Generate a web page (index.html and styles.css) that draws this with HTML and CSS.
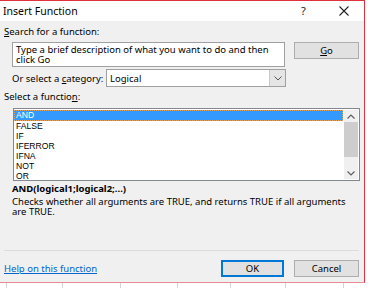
FILE: index.html
```html
<!DOCTYPE html>
<html>
<head>
<meta charset="utf-8">
<link rel="stylesheet" href="styles.css">
</head>
<body>
<div class="dialog">
  <div class="titlebar">
    <span class="title">Insert Function</span>
    <span class="help-q">?</span>
    <svg class="close" width="10" height="10" viewBox="0 0 10 10"><path d="M0.5 0.5 L9.5 9.5 M9.5 0.5 L0.5 9.5" stroke="#222" stroke-width="1.1" fill="none"/></svg>
  </div>
  <div class="body">
    <div class="label"><u>S</u>earch for a function:</div>
    <div class="search-row">
      <div class="search-box">Type a brief description of what you want to do and then click Go</div>
      <div class="btn go"><u>G</u>o</div>
    </div>
    <div class="cat-row">
      <span class="cat-label">Or select a <u>c</u>ategory:</span>
      <div class="select">
        <span class="select-val">Logical</span>
        <span class="select-arrow"><svg width="8" height="5" viewBox="0 0 8 5"><path d="M0.5 0.5 L4 4 L7.5 0.5" stroke="#555" stroke-width="1" fill="none"/></svg></span>
      </div>
    </div>
    <div class="label fn-label">Select a functio<u>n</u>:</div>
    <div class="listbox">
      <div class="items">
        <div class="item sel">AND</div>
        <div class="item">FALSE</div>
        <div class="item">IF</div>
        <div class="item">IFERROR</div>
        <div class="item">IFNA</div>
        <div class="item">NOT</div>
        <div class="item">OR</div>
      </div>
      <div class="scrollbar">
        <span class="arr"><svg width="8" height="5" viewBox="0 0 8 5"><path d="M0.5 4.5 L4 1 L7.5 4.5" stroke="#606060" stroke-width="1.2" fill="none"/></svg></span>
        <span class="track"><span class="thumb"></span></span>
        <span class="arr"><svg width="8" height="5" viewBox="0 0 8 5"><path d="M0.5 0.5 L4 4 L7.5 0.5" stroke="#606060" stroke-width="1.2" fill="none"/></svg></span>
      </div>
    </div>
    <div class="sig">AND(logical1;logical2;...)</div>
    <div class="desc">Checks whether all arguments are TRUE, and returns TRUE if all arguments are TRUE.</div>
    <div class="sep"></div>
    <div class="footer">
      <a class="link" href="#">Help on this function</a>
      <div class="btn ok">OK</div>
      <div class="btn cancel">Cancel</div>
    </div>
  </div>
</div>
<div class="sheet">
  <span class="cell w6"></span><span class="cell w56"></span><span class="cell w58"></span><span class="cell w57"></span><span class="cell w53"></span><span class="cell w55"></span><span class="cell w58"></span>
</div>
</body>
</html>
```

FILE: styles.css
```css
html, body {
  margin: 0;
  padding: 0;
  background: #ffffff;
}
body {
  font-family: "Noto Sans", "Open Sans", sans-serif;
  font-size: 9.5px;
  color: #000;
  width: 369px;
  height: 288px;
  overflow: hidden;
}
.dialog {
  width: 364px;
  height: 281px;
  border-top: 1px solid #e0313d;
  border-right: 1px solid #e0313d;
  border-bottom: 1px solid #e88a94;
  background: #f0f0f0;
  display: flex;
  flex-direction: column;
}
.titlebar {
  height: 20px;
  background: #ffffff;
  display: flex;
  align-items: center;
  padding-left: 3px;
  font-size: 10.5px;
  line-height: 20px;
}
.title { flex: 1; }
.help-q {
  width: 10px;
  margin-right: 28px;
  font-size: 11px;
  color: #222;
}
.close {
  margin-right: 15px;
}
.body {
  flex: 1;
  display: flex;
  flex-direction: column;
  padding: 5px 4px 5px 4px;
}
.label {
  line-height: 12px;
  height: 12px;
}
u { text-decoration: underline; text-underline-offset: 1px; }
.search-row {
  display: flex;
  margin-top: 4px;
  margin-left: 8px;
  gap: 9px;
  align-items: flex-start;
}
.search-box {
  width: 265px;
  height: 23px;
  border: 1px solid #a0a0a0;
  background: #fff;
  padding: 0 3px;
  line-height: 10px;
  font-size: 9.5px;
  display: flex;
  align-items: center;
}
.btn {
  background: #e1e1e1;
  border: 1px solid #adadad;
  height: 15px;
  line-height: 15px;
  text-align: center;
  box-sizing: content-box;
}
.go { width: 63px; }
.cat-row {
  display: flex;
  align-items: center;
  margin-top: 2px;
  margin-left: 8px;
  height: 18px;
}
.cat-label { width: 94px; }
.select {
  width: 178px;
  height: 16px;
  border: 1px solid #a0a0a0;
  background: #fff;
  display: flex;
  align-items: center;
}
.select-val { flex: 1; padding-left: 3px; }
.select-arrow {
  width: 15px;
  height: 16px;
  background: #e5e5e5;
  border-left: 1px solid #c8c8c8;
  display: flex;
  align-items: center;
  justify-content: center;
}
.fn-label { margin-top: 4px; }
.listbox {
  margin-top: 5px;
  margin-left: 9px;
  width: 345px;
  height: 71px;
  border: 1px solid #828790;
  background: #fff;
  display: flex;
}
.items {
  flex: 1;
  padding-top: 1px;
  font-family: "Liberation Sans", Arial, sans-serif;
  font-size: 8.6px;
}
.item {
  height: 10px;
  line-height: 10px;
  padding-left: 2px;
}
.item.sel {
  background: #3399ff;
  color: #fff;
  outline: 1px dotted #e0a060;
  outline-offset: -1px;
  height: 11px;
  line-height: 11px;
}
.scrollbar {
  width: 14px;
  background: #f0f0f0;
  display: flex;
  flex-direction: column;
  margin: 1px 1px 1px 1px;
}
.arr {
  height: 12px;
  display: flex;
  align-items: center;
  justify-content: center;
}
.track {
  flex: 1;
  display: flex;
  flex-direction: column;
}
.thumb {
  height: 35px;
  background: #cdcdcd;
}
.sig {
  margin-top: 2px;
  font-weight: bold;
  line-height: 12px;
  margin-left: 8px;
}
.desc {
  margin-top: 2px;
  margin-left: 8px;
  line-height: 10px;
  width: 345px;
}
.sep {
  margin-top: auto;
  height: 1px;
  background: #dcdcdc;
  margin-right: 1px;
}
.footer {
  display: flex;
  align-items: center;
  margin-top: 9px;
  height: 17px;
}
.link {
  flex: 1;
  color: #0066cc;
  text-decoration: underline;
}
.ok {
  width: 61px;
  border-color: #0078d7;
  box-shadow: inset 0 0 0 1px #0078d7;
  margin-right: 10px;
}
.cancel { width: 63px; margin-right: 1px; }
.sheet {
  display: flex;
  height: 5px;
}
.cell {
  height: 5px;
  border-right: 1px solid #d4d4d4;
  box-sizing: border-box;
}
.w6 { width: 7px; }
.w56 { width: 56px; }
.w58 { width: 58px; }
.w57 { width: 57px; }
.w53 { width: 53px; }
.w55 { width: 55px; }
```
